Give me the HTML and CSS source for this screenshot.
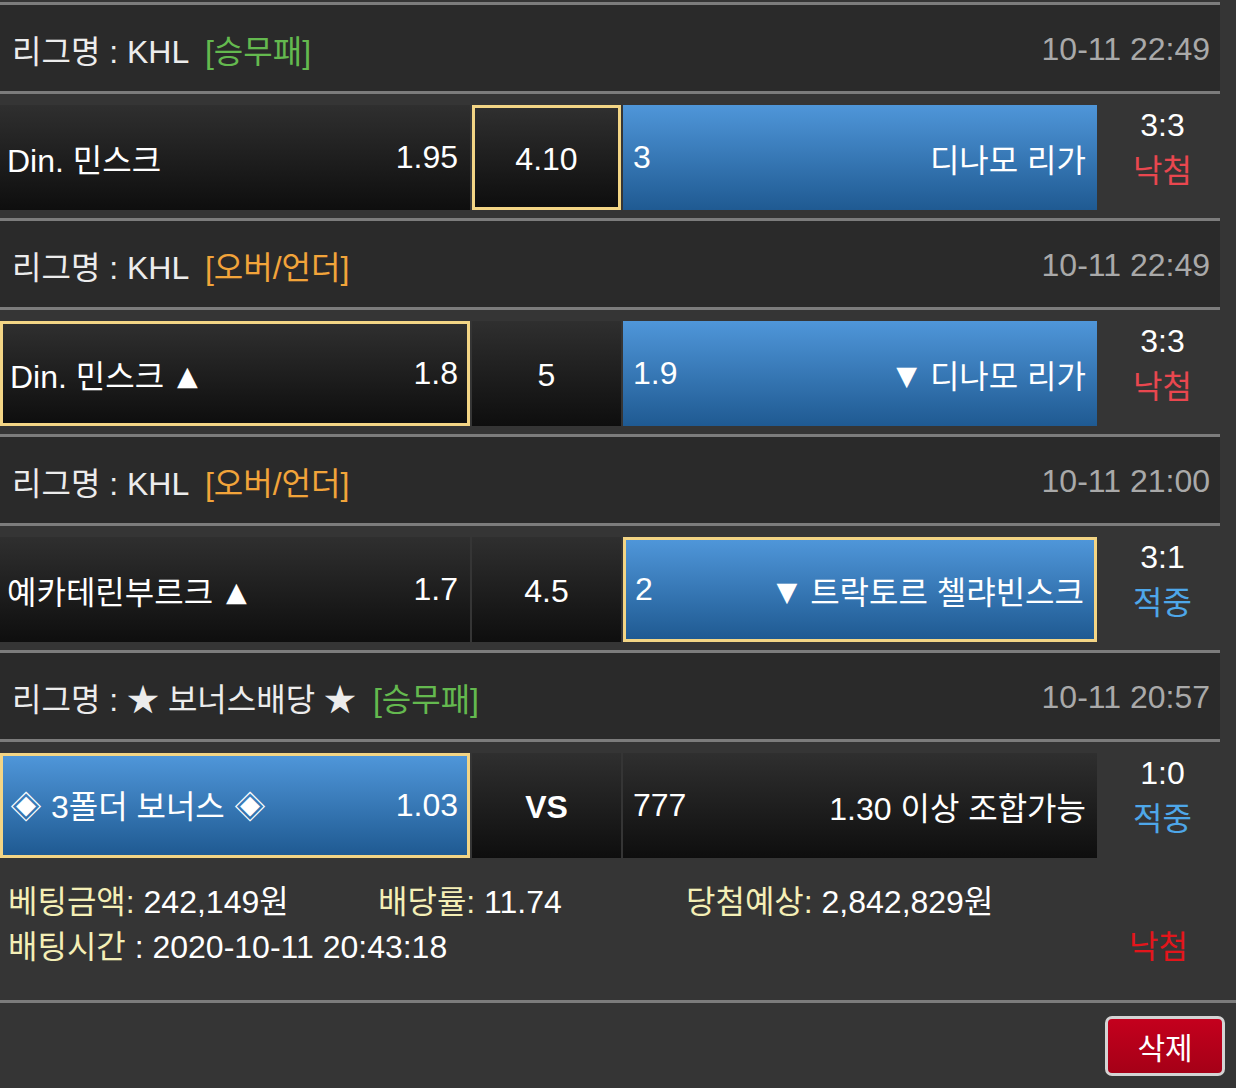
FILE: index.html
```html
<!DOCTYPE html>
<html lang="ko">
<head>
  <meta charset="UTF-8">
  <title>베팅내역</title>
  <link rel="stylesheet" href="styles.css">
</head>
<body>

  <div class="slip">

    <!-- Game 1 -->
    <div class="game">
      <div class="league">
        <div class="league-name">리그명 : KHL <span class="type win">[승무패]</span></div>
        <div class="league-time">10-11 22:49</div>
      </div>
      <div class="bet-row">
        <div class="cell home dark"><span>Din. 민스크</span><span>1.95</span></div>
        <div class="cell draw dark picked">4.10</div>
        <div class="cell away blue"><span>3</span><span>디나모 리가</span></div>
        <div class="result"><div>3:3</div><div class="lose">낙첨</div></div>
      </div>
    </div>

    <!-- Game 2 -->
    <div class="game">
      <div class="league">
        <div class="league-name">리그명 : KHL <span class="type ou">[오버/언더]</span></div>
        <div class="league-time">10-11 22:49</div>
      </div>
      <div class="bet-row">
        <div class="cell home dark picked"><span>Din. 민스크 <i class="arrow up">▲</i></span><span>1.8</span></div>
        <div class="cell draw dark">5</div>
        <div class="cell away blue"><span>1.9</span><span><i class="arrow down">▼</i> 디나모 리가</span></div>
        <div class="result"><div>3:3</div><div class="lose">낙첨</div></div>
      </div>
    </div>

    <!-- Game 3 -->
    <div class="game">
      <div class="league">
        <div class="league-name">리그명 : KHL <span class="type ou">[오버/언더]</span></div>
        <div class="league-time">10-11 21:00</div>
      </div>
      <div class="bet-row">
        <div class="cell home dark"><span>예카테린부르크 <i class="arrow up">▲</i></span><span>1.7</span></div>
        <div class="cell draw dark">4.5</div>
        <div class="cell away blue picked"><span>2</span><span><i class="arrow down">▼</i> 트락토르 첼랴빈스크</span></div>
        <div class="result"><div>3:1</div><div class="hit">적중</div></div>
      </div>
    </div>

    <!-- Game 4 -->
    <div class="game">
      <div class="league">
        <div class="league-name">리그명 : ★ 보너스배당 ★ <span class="type win">[승무패]</span></div>
        <div class="league-time">10-11 20:57</div>
      </div>
      <div class="bet-row">
        <div class="cell home blue picked"><span>◈ 3폴더 보너스 ◈</span><span>1.03</span></div>
        <div class="cell draw dark vs">VS</div>
        <div class="cell away dark"><span>777</span><span>1.30 이상 조합가능</span></div>
        <div class="result"><div>1:0</div><div class="hit">적중</div></div>
      </div>
    </div>

  </div>

  <div class="summary">
    <div class="summary-line">
      <span><em>베팅금액:</em> 242,149원</span>
      <span><em>배당률:</em> 11.74</span>
      <span><em>당첨예상:</em> 2,842,829원</span>
    </div>
    <div class="summary-line second">
      <span><em>배팅시간</em> : 2020-10-11 20:43:18</span>
      <span class="final">낙첨</span>
    </div>
  </div>

  <div class="actions">
    <button class="btn-delete">삭제</button>
  </div>

</body>
</html>
```

FILE: styles.css
```css
body {
  margin: 0;
  background: #353535;
  color: #fff;
  font-family: "Liberation Sans", "Noto Sans CJK KR", sans-serif;
  font-size: 32px;
}

.slip { width: 1220px; padding-top: 2px; }

.league {
  display: flex; justify-content: space-between; align-items: center;
  height: 92px; padding: 2px 10px 0 12px;
  box-sizing: border-box;
  background: #2a2a2a;
  border-top: 3px solid #7c7c7c; border-bottom: 3px solid #7c7c7c;
  color: #ececec;
}
.league-time { color: #a9a9a9; }
.type { margin-left: 8px; }
.type.win { color: #64b94f; }
.type.ou { color: #f2a43a; }

.bet-row {
  display: flex; gap: 2px;
  height: 124px; padding: 11px 0 8px;
  box-sizing: border-box;
}
.cell {
  display: flex; align-items: center; justify-content: space-between;
  box-sizing: border-box; height: 105px;
}
.cell.dark { background: linear-gradient(#2f2f2f, #0e0e0e); }
.cell.blue { background: linear-gradient(#4f96d9, #1f5a92); }
.cell.picked { border: 3px solid #f3d585; }

.home { width: 470px; padding: 0 12px 0 7px; }
.draw { width: 149px; justify-content: center; padding-top: 4px; }
.away { width: 474px; padding: 0 11px 0 10px; }
.home.picked { padding-left: 7px; padding-right: 9px; }
.away.picked { padding-left: 9px; padding-right: 10px; }
.vs { font-weight: bold; }
.arrow {
  font-style: normal; font-family: "DejaVu Sans", sans-serif;
  font-size: 27px; position: relative; top: -3px;
}
.arrow.up { margin-left: 4px; }
.arrow.down { margin-right: 4px; }

.result {
  flex: 1; text-align: center;
  line-height: 46px; margin-top: -3px; padding-left: 6px;
}
.lose { color: #e9474f; }
.hit { color: #4ea7e9; }

.summary {
  padding: 14px 0 30px 8px;
  line-height: 45px;
  border-bottom: 3px solid #7c7c7c;
}
.summary em { font-style: normal; color: #f4efb6; }
.summary-line { display: flex; }
.summary-line span:nth-child(1) { width: 370px; }
.summary-line span:nth-child(2) { width: 308px; }
.summary-line.second { width: 1212px; justify-content: space-between; }
.summary-line.second span { width: auto; }
.final { width: 123px !important; text-align: center; color: #e3151b; }

.actions { display: flex; justify-content: flex-end; padding: 13px 11px; }
.btn-delete {
  width: 120px; height: 60px;
  font-family: inherit; font-size: 30px; color: #fff;
  background: linear-gradient(#c4001d, #a50017);
  border: 3px solid #d4d4d4; border-radius: 7px;
}
```
